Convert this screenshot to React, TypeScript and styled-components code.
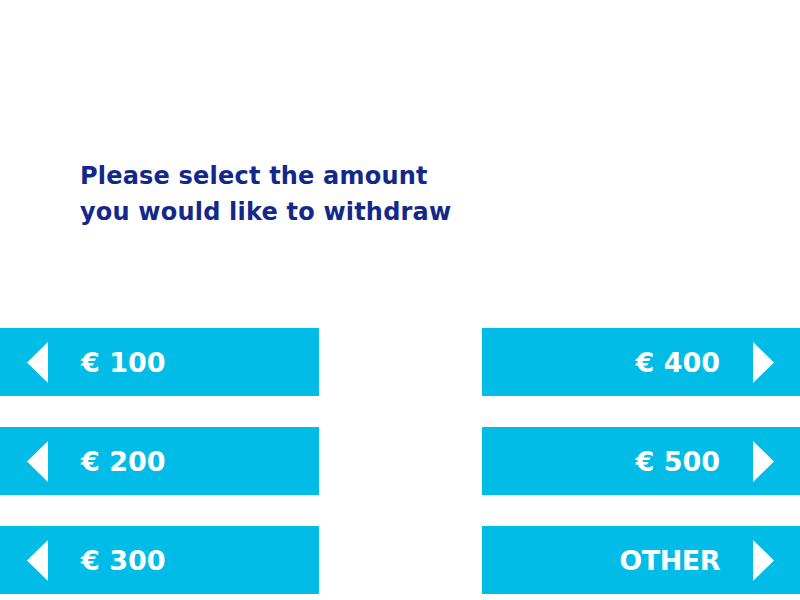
import React from "react";
import styled, { createGlobalStyle } from "styled-components";

const Global = createGlobalStyle`
  html, body { margin: 0; padding: 0; background: #ffffff; }
  body { font-family: "DejaVu Sans", "Liberation Sans", sans-serif; }
`;

const Screen = styled.div`
  width: 800px;
  height: 600px;
  display: flex;
  flex-direction: column;
  background: #ffffff;
  overflow: hidden;
`;

const Heading = styled.h1`
  margin: 158px 0 0 80px;
  font-family: "DejaVu Sans", sans-serif;
  font-weight: 700;
  font-size: 24px;
  line-height: 36px;
  color: #14288c;
  letter-spacing: 0.2px;
`;

const Grid = styled.div`
  margin-top: 98px;
  display: grid;
  grid-template-columns: 319px 318px;
  justify-content: space-between;
  row-gap: 31px;
`;

const Btn = styled.button<{ $side: "left" | "right" }>`
  height: 68px;
  border: 0;
  margin: 0;
  background: #00bce6;
  color: #ffffff;
  display: flex;
  align-items: center;
  justify-content: ${(p) => (p.$side === "left" ? "flex-start" : "flex-end")};
  padding: ${(p) => (p.$side === "left" ? "0 0 0 27px" : "0 26px 0 0")};
  gap: 33px;
  font-family: "DejaVu Sans", sans-serif;
  font-weight: 700;
  font-size: 27px;
  cursor: pointer;
`;

const Arrow = styled.svg`
  width: 21px;
  height: 41px;
  flex: none;
`;

const LeftArrow = () => (
  <Arrow viewBox="0 0 21 41">
    <polygon points="21,0 21,41 0,20.5" fill="#ffffff" />
  </Arrow>
);
const RightArrow = () => (
  <Arrow viewBox="0 0 21 41">
    <polygon points="0,0 0,41 21,20.5" fill="#ffffff" />
  </Arrow>
);

const Label = styled.span<{ $caps?: boolean }>`
  display: block;
  letter-spacing: ${(p) => (p.$caps ? "-0.5px" : "0")};
`;

const rows = [
  ["€ 100", "€ 400"],
  ["€ 200", "€ 500"],
  ["€ 300", "OTHER"],
];

export default function App() {
  return (
    <Screen>
      <Global />
      <Heading>
        Please select the amount
        <br />
        you would like to withdraw
      </Heading>
      <Grid>
        {rows.map(([l, r]) => (
          <React.Fragment key={l}>
            <Btn $side="left">
              <LeftArrow />
              <Label>{l}</Label>
            </Btn>
            <Btn $side="right">
              <Label $caps={r === "OTHER"}>{r}</Label>
              <RightArrow />
            </Btn>
          </React.Fragment>
        ))}
      </Grid>
    </Screen>
  );
}
